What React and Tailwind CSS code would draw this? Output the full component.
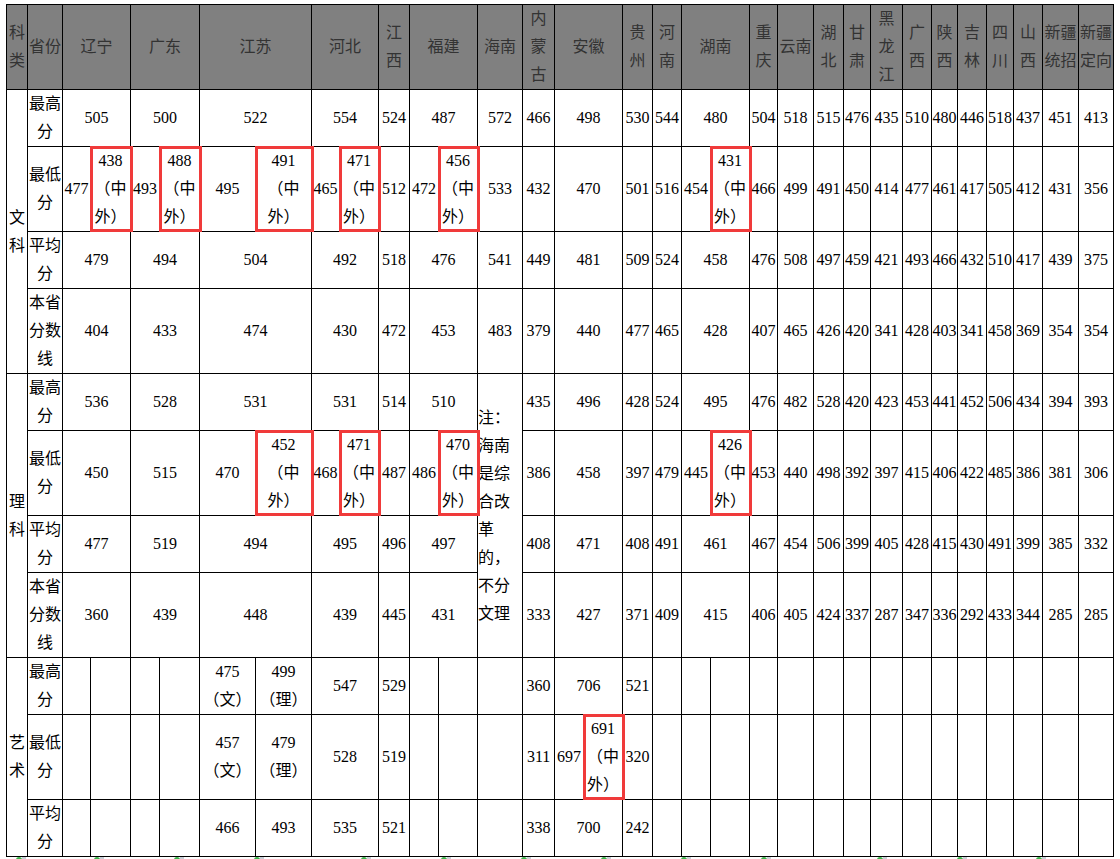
import React from "react";

const colW = [
  "w-[21px]", "w-[35px]", "w-[28px]", "w-[40px]", "w-[29px]", "w-[40px]",
  "w-[56px]", "w-[56px]", "w-[28px]", "w-[39px]", "w-[31px]", "w-[29px]",
  "w-[39px]", "w-[45px]", "w-[32px]", "w-[29px]", "w-[39px]", "w-[30px]",
  "w-[29px]", "w-[29px]", "w-[39px]", "w-[28px]", "w-[36px]", "w-[30px]",
  "w-[27px]", "w-[32px]", "w-[29px]", "w-[26px]", "w-[29px]", "w-[27px]",
  "w-[29px]", "w-[36px]", "w-[35px]",
];

// shorthand helpers
const c = (t, opts = {}) => ({ t, ...opts });
const w = (t) => ({ t, s: 2 });
const bx = (t) => ({ t, box: true });
const tail = (arr) => arr.map((v) => c(v));

const header = [
  c("科类"), c("省份"), w("辽宁"), w("广东"), w("江苏"), w("河北"), c("江西"),
  w("福建"), c("海南"), c("内蒙古"), w("安徽"), c("贵州"), c("河南"), w("湖南"),
  ...tail(["重庆", "云南", "湖北", "甘肃", "黑龙江", "广西", "陕西", "吉林", "四川", "山西", "新疆统招", "新疆定向"]),
];

const rows = [
  // 文科
  {
    h: "h-[57px]",
    cells: [
      c("文科", { r: 4 }), c("最高分"),
      w("505"), w("500"), w("522"), w("554"), c("524"), w("487"), c("572"), c("466"),
      w("498"), c("530"), c("544"), w("480"),
      ...tail(["504", "518", "515", "476", "435", "510", "480", "446", "518", "437", "451", "413"]),
    ],
  },
  {
    h: "h-[85px]",
    cells: [
      c("最低分"),
      c("477"), bx("438"), c("493"), bx("488"), c("495"), bx("491"), c("465"), bx("471"),
      c("512"), c("472"), bx("456"), c("533"), c("432"), w("470"), c("501"), c("516"),
      c("454"), bx("431"),
      ...tail(["466", "499", "491", "450", "414", "477", "461", "417", "505", "412", "431", "356"]),
    ],
  },
  {
    h: "h-[57px]",
    cells: [
      c("平均分"),
      w("479"), w("494"), w("504"), w("492"), c("518"), w("476"), c("541"), c("449"),
      w("481"), c("509"), c("524"), w("458"),
      ...tail(["476", "508", "497", "459", "421", "493", "466", "432", "510", "417", "439", "375"]),
    ],
  },
  {
    h: "h-[85px]",
    cells: [
      c("本省分数线"),
      w("404"), w("433"), w("474"), w("430"), c("472"), w("453"), c("483"), c("379"),
      w("440"), c("477"), c("465"), w("428"),
      ...tail(["407", "465", "426", "420", "341", "428", "403", "341", "458", "369", "354", "354"]),
    ],
  },
  // 理科
  {
    h: "h-[57px]",
    cells: [
      c("理科", { r: 4 }), c("最高分"),
      w("536"), w("528"), w("531"), w("531"), c("514"), w("510"),
      c("note", { r: 4, note: true }),
      c("435"), w("496"), c("428"), c("524"), w("495"),
      ...tail(["476", "482", "528", "420", "423", "453", "441", "452", "506", "434", "394", "393"]),
    ],
  },
  {
    h: "h-[85px]",
    cells: [
      c("最低分"),
      w("450"), w("515"), c("470"), bx("452"), c("468"), bx("471"), c("487"),
      c("486"), bx("470"), c("386"), w("458"), c("397"), c("479"), c("445"), bx("426"),
      ...tail(["453", "440", "498", "392", "397", "415", "406", "422", "485", "386", "381", "306"]),
    ],
  },
  {
    h: "h-[57px]",
    cells: [
      c("平均分"),
      w("477"), w("519"), w("494"), w("495"), c("496"), w("497"), c("408"), w("471"),
      c("408"), c("491"), w("461"),
      ...tail(["467", "454", "506", "399", "405", "428", "415", "430", "491", "399", "385", "332"]),
    ],
  },
  {
    h: "h-[85px]",
    cells: [
      c("本省分数线"),
      w("360"), w("439"), w("448"), w("439"), c("445"), w("431"), c("333"), w("427"),
      c("371"), c("409"), w("415"),
      ...tail(["406", "405", "424", "337", "287", "347", "336", "292", "433", "344", "285", "285"]),
    ],
  },
  // 艺术
  {
    h: "h-[57px]",
    cells: [
      c("艺术", { r: 3 }), c("最高分"),
      c(""), c(""), c(""), c(""), c("475", { sub: "（文）" }), c("499", { sub: "（理）" }),
      w("547"), c("529"), c(""), c(""), c(""), c("360"), w("706"), c("521"), c(""),
      c(""), c(""),
      ...tail(["", "", "", "", "", "", "", "", "", "", "", ""]),
    ],
  },
  {
    h: "h-[85px]",
    cells: [
      c("最低分"),
      c(""), c(""), c(""), c(""), c("457", { sub: "（文）" }), c("479", { sub: "（理）" }),
      w("528"), c("519"), c(""), c(""), c(""), c("311"), c("697"), bx("691"), c("320"),
      c(""), c(""), c(""),
      ...tail(["", "", "", "", "", "", "", "", "", "", "", ""]),
    ],
  },
  {
    h: "h-[57px]",
    cells: [
      c("平均分"),
      c(""), c(""), c(""), c(""), c("466"), c("493"),
      w("535"), c("521"), c(""), c(""), c(""), c("338"), w("700"), c("242"), c(""),
      c(""), c(""),
      ...tail(["", "", "", "", "", "", "", "", "", "", "", ""]),
    ],
  },
];

function Cell({ cell }) {
  const base = "relative border border-black p-0 text-center align-middle";
  if (cell.note) {
    return (
      <td rowSpan={cell.r} className={`${base} !text-left`}>
        注：<br />海南<br />是综<br />合改<br />革<br />的，<br />不分<br />文理
      </td>
    );
  }
  return (
    <td colSpan={cell.s} rowSpan={cell.r} className={base}>
      {cell.box ? (
        <>
          {cell.t}
          <br />（中
          <br />外）
          <span className="pointer-events-none absolute top-[-1px] bottom-[-1px] left-[-1px] right-[-3px] border-[3px] border-[#f03a3a]" />
        </>
      ) : cell.sub ? (
        <>
          {cell.t}
          <br />
          {cell.sub}
        </>
      ) : (
        cell.t
      )}
    </td>
  );
}

const marks = [
  "ml-[10px]", "ml-[68px]", "ml-[70px]", "ml-[70px]", "ml-[97px]", "ml-[70px]",
  "ml-[70px]", "ml-[70px]", "ml-[70px]", "ml-[70px]", "ml-[106px]", "ml-[70px]", "ml-[69px]",
];

export default function App() {
  return (
    <div className="min-h-screen bg-white pt-[4px] pl-[6px] font-['Liberation_Serif','Noto_Sans_CJK_SC',serif] text-[16px] leading-[28px] text-black">
      <table className="table-fixed border-collapse w-[1108px]">
        <colgroup>
          {colW.map((cw, i) => (
            <col key={i} className={cw} />
          ))}
        </colgroup>
        <thead>
          <tr className="h-[85px] bg-[#808080] text-[#333333]">
            {header.map((h, i) => (
              <th
                key={i}
                colSpan={h.s}
                className="border border-black p-0 text-center align-middle font-normal"
              >
                {h.t}
              </th>
            ))}
          </tr>
        </thead>
        <tbody>
          {rows.map((row, ri) => (
            <tr key={ri} className={row.h}>
              {row.cells.map((cell, ci) => (
                <Cell key={ci} cell={cell} />
              ))}
            </tr>
          ))}
        </tbody>
      </table>
      <div className="flex h-[3px] overflow-hidden">
        {marks.map((m, i) => (
          <span key={i} className={`${m} flex h-[3px] w-[10px] shrink-0`}>
            <span className="h-[3px] w-[6px] rounded-t-sm bg-[#3bb54a]" />
            <span className="h-[2px] w-[4px] bg-[#c8d0d8]" />
          </span>
        ))}
      </div>
    </div>
  );
}
